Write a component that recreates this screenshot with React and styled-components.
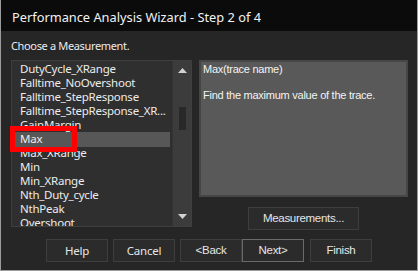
import React from "react";
import styled, { createGlobalStyle } from "styled-components";

const Global = createGlobalStyle`
  html, body { margin: 0; padding: 0; background: #262626; }
  * { box-sizing: border-box; }
`;

const Window = styled.div`
  width: 418px;
  height: 271px;
  background: #262626;
  border: 1px solid #9c9c9c;
  border-top: none;
  display: flex;
  flex-direction: column;
  font-family: "Noto Sans", "Open Sans", sans-serif;
  overflow: hidden;
  position: relative;
`;

const TitleBar = styled.div`
  height: 31px;
  background: #0b0b0b;
  color: #f2f2f2;
  font-size: 12.8px;
  padding-left: 11px;
  display: flex;
  align-items: center;
  padding-top: 2px;
`;

const Content = styled.div`
  flex: 1;
  padding: 6px 9px 0 10px;
  display: flex;
  flex-direction: column;
`;

const Prompt = styled.div`
  color: #ececec;
  font-size: 11px;
  letter-spacing: -0.35px;
  height: 23px;
  line-height: 17px;
`;

const MainRow = styled.div`
  display: flex;
  gap: 7px;
`;

const ListBox = styled.div`
  width: 182px;
  height: 167px;
  border: 1px solid #3f3f3f;
  background: #2f2f2f;
  display: flex;
`;

const Items = styled.div`
  flex: 1;
  overflow: hidden;
  padding: 1px 2px 0 3px;
`;

const Item = styled.div`
  line-height: 14px;
  font-size: 11.5px;
  letter-spacing: -0.25px;
  color: #ececec;
  padding-left: 5px;
  white-space: nowrap;
  background: ${(p) => (p.$selected ? "#575757" : "transparent")};
  height: ${(p) => (p.$selected ? "15px" : "14px")};
  margin-bottom: ${(p) => (p.$selected ? "-1px" : "0")};
`;

const ScrollBar = styled.div`
  width: 19px;
  background: #3c3c3c;
  border-left: 1px solid #333;
  display: flex;
  flex-direction: column;
  align-items: center;
  justify-content: space-between;
  padding: 7px 0 7px;
`;

const ThumbTrack = styled.div`
  flex: 1;
  width: 100%;
  display: flex;
  justify-content: center;
  padding-top: 34px;
`;

const Thumb = styled.div`
  width: 7px;
  height: 23px;
  background: #282828;
`;

const Arrow = styled.svg`
  display: block;
`;

const RightCol = styled.div`
  flex: 1;
  display: flex;
  flex-direction: column;
  align-items: center;
`;

const Description = styled.div`
  width: 209px;
  height: 137px;
  background: #595959;
  border: 2px solid #464646;
  color: #f4f4f4;
  font-family: "Liberation Sans", Arial, sans-serif;
  font-size: 11px;
  letter-spacing: -0.25px;
  line-height: 13px;
  padding: 1px 2px;
`;

const DescLine = styled.div`
  height: ${(p) => p.$h || 13}px;
`;

const Button = styled.button`
  width: ${(p) => p.$w || 62}px;
  height: 23px;
  background: #2b2b2b;
  border: 1px solid ${(p) => (p.$default ? "#6a6a6a" : "#3e3e3e")};
  color: #e6e6e6;
  font-family: ${(p) =>
    p.$narrow ? '"Liberation Sans", Arial, sans-serif' : '"Noto Sans", "Open Sans", sans-serif'};
  font-size: ${(p) => (p.$narrow ? "11.5px" : "11.5px")};
  letter-spacing: ${(p) => (p.$narrow ? "-0.3px" : "-0.2px")};
  padding: 0;
  margin-left: ${(p) => p.$ml || 0}px;
  cursor: default;
`;

const MeasureRow = styled.div`
  margin-top: 8px;
`;

const ButtonRow = styled.div`
  display: flex;
  margin-top: 9px;
  padding-left: 35px;
`;

const Annotation = styled.div`
  position: absolute;
  left: 9px;
  top: 126px;
  width: 67px;
  height: 26px;
  border: 5px solid #ff0000;
  pointer-events: none;
`;

const items = [
  "DutyCycle_XRange",
  "Falltime_NoOvershoot",
  "Falltime_StepResponse",
  "Falltime_StepResponse_XR...",
  "GainMargin",
  "Max",
  "Max_XRange",
  "Min",
  "Min_XRange",
  "Nth_Duty_cycle",
  "NthPeak",
  "Overshoot",
];

export default function App() {
  return (
    <>
      <Global />
      <Window>
        <TitleBar>Performance Analysis Wizard - Step 2 of 4</TitleBar>
        <Content>
          <Prompt>Choose a Measurement.</Prompt>
          <MainRow>
            <ListBox>
              <Items>
                {items.map((it) => (
                  <Item key={it} $selected={it === "Max"}>
                    {it}
                  </Item>
                ))}
              </Items>
              <ScrollBar>
                <Arrow width="9" height="5" viewBox="0 0 9 5">
                  <polygon points="4.5,0 9,5 0,5" fill="#d2d2d2" />
                </Arrow>
                <ThumbTrack>
                  <Thumb />
                </ThumbTrack>
                <Arrow width="9" height="5" viewBox="0 0 9 5">
                  <polygon points="0,0 9,0 4.5,5" fill="#d2d2d2" />
                </Arrow>
              </ScrollBar>
            </ListBox>
            <RightCol>
              <Description>
                <DescLine $h={26}>Max(trace name)</DescLine>
                <DescLine>Find the maximum value of the trace.</DescLine>
              </Description>
              <MeasureRow>
                <Button $w={111} $narrow>
                  Measurements...
                </Button>
              </MeasureRow>
            </RightCol>
          </MainRow>
          <ButtonRow>
            <Button>Help</Button>
            <Button $ml={5}>Cancel</Button>
            <Button $ml={5} $narrow>&lt;Back</Button>
            <Button $default $narrow>Next&gt;</Button>
            <Button $ml={6} $narrow>Finish</Button>
          </ButtonRow>
        </Content>
        <Annotation />
      </Window>
    </>
  );
}
